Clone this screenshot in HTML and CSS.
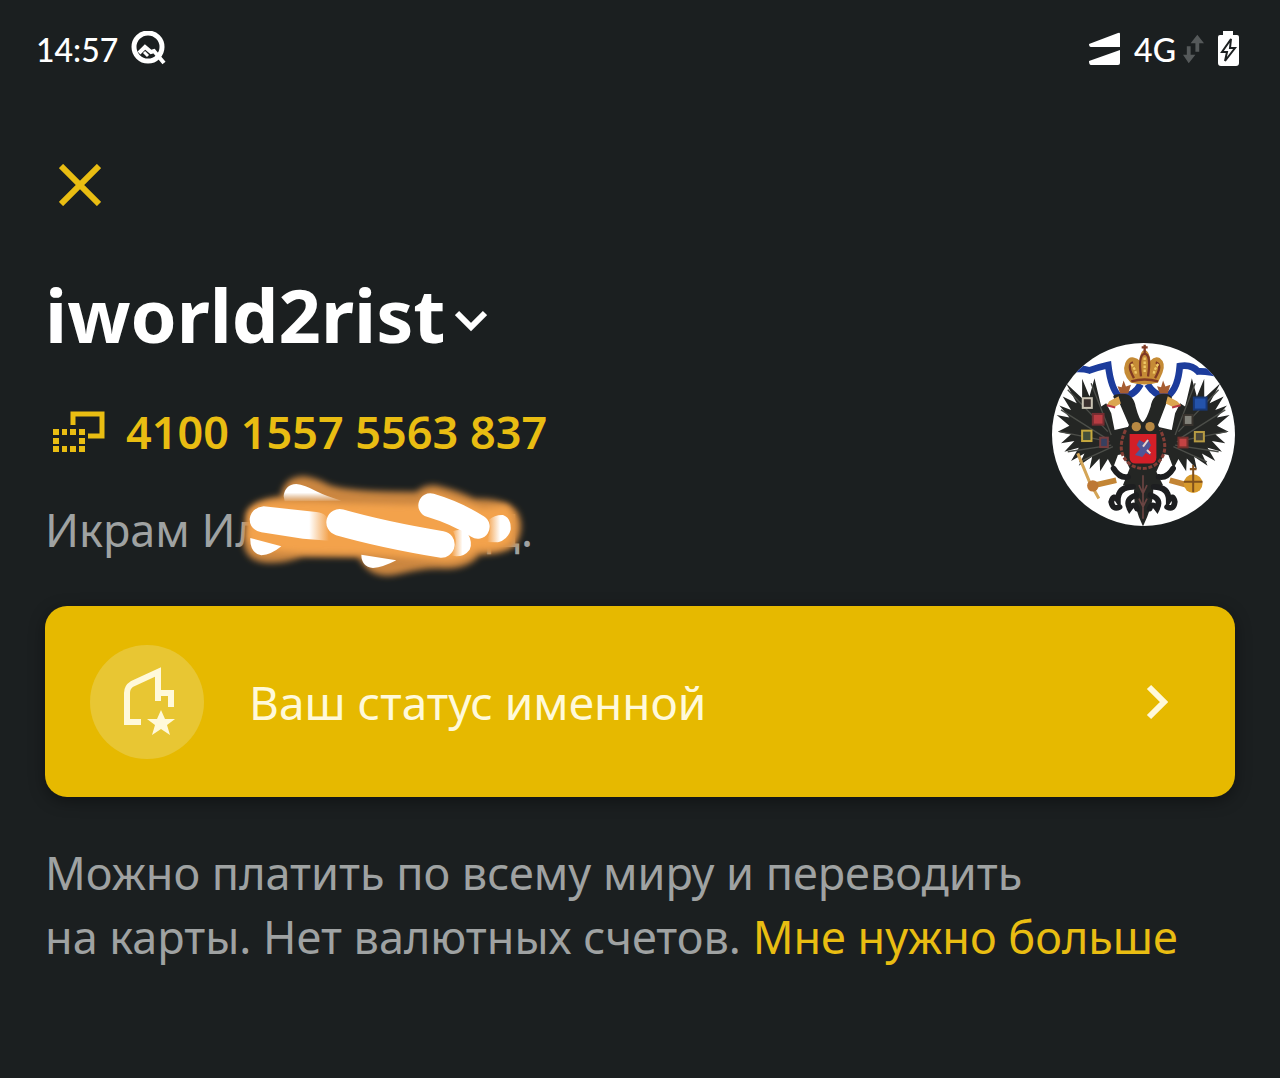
FILE: index.html
```html
<!DOCTYPE html>
<html lang="ru">
<head>
    <meta charset="UTF-8">
    <meta name="viewport" content="width=device-width, initial-scale=1.0">
    <title>Профиль</title>
    <link rel="stylesheet" href="styles.css">
</head>
<body>
    <!-- Строка состояния -->
    <div class="statusbar">
        <div class="status-group">
            <span>14:57</span>
            <svg width="36" height="36" viewBox="0 0 36 36" fill="none" stroke="#fff" stroke-width="5">
                <circle cx="17" cy="16" r="14"/>
                <path d="M8 22l6-6 6 5 3-1 10 12" stroke-width="4"/>
                <path d="M13 21l4 4" stroke-width="3"/>
            </svg>
        </div>
        <div class="status-group">
            <svg width="32" height="34" viewBox="0 0 32 34" fill="#fff">
                <path d="M0 12L29 1q2-1 2 1v13H2q-2 0-2-3zM0 29L31 18v13q0 2-2 2H2q-2 0-2-4z"/>
            </svg>
            <span class="network">4G</span>
            <svg class="traffic" width="21" height="32" viewBox="0 0 22 32" fill="#55595a">
                <path d="M15 1l7 9h-5v9h-4v-9H8zM4 13h4v9h5l-7 9-6-9h4z"/>
            </svg>
            <svg width="23" height="36" viewBox="0 0 23 36">
                <path d="M6 0h10v4h4q2 0 2 2v26q0 3-3 3H4q-3 0-3-3V6q0-2 2-2h3z" fill="#fff"/>
                <path d="M14 8L5 21h5l-2 9 10-13h-5z" fill="none" stroke="#1b1f20" stroke-width="2"/>
            </svg>
        </div>
    </div>

    <div class="page">
        <button class="close-btn" aria-label="Закрыть">
            <svg width="42" height="42" viewBox="0 0 42 42" fill="none" stroke="#e9bd12" stroke-width="6">
                <path d="M2 2l38 38M40 2L2 40"/>
            </svg>
        </button>

        <!-- Данные пользователя -->
        <div class="profile">
            <div class="info">
                <button class="login">
                    <span>iworld2rist</span>
                    <svg width="32" height="22" viewBox="0 0 32 22" fill="none" stroke="#fff" stroke-width="6">
                        <path d="M2 3l14 14L30 3"/>
                    </svg>
                </button>
                <a class="wallet" href="#">
                    <svg width="54" height="42" viewBox="0 0 54 42">
                        <path d="M21 14V3h29v22H36" fill="none" stroke="#e9bd12" stroke-width="5"/>
                        <path d="M1 18h6v6H1zM10 18h5v6h-5zM18 18h6v6h-6zM27 18h6v6h-6zM1 27h6v6H1zM27 27h6v6h-6zM1 35h6v6H1zM10 35h5v6h-5zM18 35h6v6h-6zM27 35h6v6h-6z" fill="#e9bd12"/>
                    </svg>
                    <span>4100 1557 5563 837</span>
                </a>
                <div class="name">
                    <span>Икрам Ил</span>
                    <span>Д.</span>
                    <svg class="scribble" viewBox="580 10 900 345">
                        <defs>
                            <filter id="glow" x="-10%" y="-20%" width="120%" height="140%">
                                <feGaussianBlur stdDeviation="9"/>
                            </filter>
                            <linearGradient id="fadeDown" x1="0" y1="0" x2="0" y2="1">
                                <stop offset="0.5" stop-color="#fff"/>
                                <stop offset="1" stop-color="#fff" stop-opacity="0.1"/>
                            </linearGradient>
                            <linearGradient id="fadeLeft" x1="0" y1="0" x2="1" y2="0">
                                <stop offset="0.1" stop-color="#f3a24c"/>
                                <stop offset="0.6" stop-color="#fff"/>
                            </linearGradient>
                            <linearGradient id="fadeRight" x1="0" y1="0" x2="1" y2="0">
                                <stop offset="0.75" stop-color="#fff"/>
                                <stop offset="1" stop-color="#f3a24c"/>
                            </linearGradient>
                        </defs>
                        <path d="M725 90Q735 35 795 35Q830 40 870 62Q930 82 1130 82Q1160 52 1205 66Q1255 78 1305 102Q1400 100 1432 140Q1460 190 1425 245Q1390 270 1320 270Q1290 310 1220 312Q1150 308 1080 328Q1010 345 975 305L955 278L790 276Q720 300 670 293Q620 285 612 240L618 150Q630 105 725 95z" fill="#cb8640" filter="url(#glow)"/>
                        <path d="M735 110Q860 110 900 115L1130 120L1180 85L1330 130L1400 120Q1440 160 1415 235Q1380 258 1310 255Q1280 290 1210 290L1080 278L960 268L790 266L650 255L622 220L628 145Q650 110 735 110z" fill="#f3a24c" filter="url(#glow)"/>
                        <path d="M732 95Q735 60 770 58Q795 60 830 80Q860 95 905 108L735 110z" fill="url(#fadeDown)"/>
                        <path d="M632 220Q630 265 665 272Q695 270 725 245z" fill="#fff"/>
                        <path d="M965 270Q965 305 1000 310Q1030 308 1070 287z" fill="#fff"/>
                        <path d="M672 125L830 142Q875 148 865 190L868 228L790 222L665 203Q630 195 630 163Q635 130 672 125z" fill="url(#fadeRight)"/>
                        <path d="M1335 232Q1360 205 1348 165Q1365 150 1390 151Q1415 160 1413 195Q1405 225 1375 233z" fill="url(#fadeLeft)"/>
                        <path d="M1230 272Q1260 240 1240 200Q1265 190 1285 207Q1300 235 1290 255Q1275 275 1250 275z" fill="url(#fadeLeft)"/>
                        <path d="M1172 122Q1250 145 1314 186" fill="none" stroke="#fff" stroke-width="72" stroke-linecap="round"/>
                        <path d="M900 173Q1030 210 1205 239" fill="none" stroke="#fff" stroke-width="80" stroke-linecap="round"/>
                    </svg>
                </div>
            </div>
            <svg class="avatar" viewBox="38 25 547 547">
                <rect x="38" y="25" width="547" height="547" fill="#fff"/>
                <!-- лента -->
                <g fill="none" stroke="#1c3c9c" stroke-width="20">
                    <path d="M80 106Q125 98 150 107Q175 98 206 91Q214 160 238 184Q280 190 303 148"/>
                    <path d="M560 122Q500 108 475 110Q455 88 420 94Q415 160 385 183Q350 190 323 148"/>
                </g>
                <!-- крылья -->
                <g fill="#242624">
                    <path id="wing" d="M290 270L225 285L215 235L200 205L185 215L165 130L150 185L128 132L128 190L80 145L112 205L70 185L95 225L60 212L90 248L52 240L90 272L55 290L95 298L65 325L105 318L75 350L118 338L95 378L135 355L118 392L158 365L150 402L180 370L182 408L205 372L220 400L235 360L285 350z"/>
                    <use href="#wing" transform="matrix(-1 0 0 1 621 0)"/>
                    <path d="M240 205Q205 180 235 178Q280 170 288 215Q300 260 310 262Q320 255 333 215Q340 170 385 178Q410 190 380 205L355 270L385 330L350 410L370 450L340 455Q345 500 310 573Q275 500 285 455L250 450L270 400L238 330L268 270z"/>
                </g>
                <g fill="none" stroke="#4c4e49" stroke-width="4">
                    <path d="M85 165L205 290M65 225L200 310M60 290L210 320M85 350L215 330M120 380L220 335M155 145L215 300"/>
                    <path d="M536 165L416 290M556 225L421 310M561 290L411 320M536 350L406 330M501 380L401 335M466 145L406 300"/>
                </g>
                <!-- хвост и лапы -->
                <g fill="none" stroke="#1d1e20" stroke-width="17" stroke-linecap="round">
                    <path d="M280 455Q235 455 235 495Q222 475 215 500Q220 525 240 515M290 480Q255 490 270 520Q285 500 292 520M265 425Q240 430 222 400"/>
                    <path d="M342 455Q387 455 387 495Q400 475 405 500Q402 525 382 515M332 480Q367 490 352 520Q337 500 330 520M357 425Q382 430 400 400"/>
                </g>
                <path d="M310 420v130M298 450l12 25 12-25M298 490l12 25 12-25" fill="none" stroke="#6a4442" stroke-width="5"/>
                <path d="M230 435L165 450M390 435L450 452" fill="none" stroke="#c38535" stroke-width="17"/>
                <path d="M115 355L150 440L178 490" fill="none" stroke="#d4a557" stroke-width="9"/>
                <circle cx="160" cy="452" r="17" fill="#bd7835"/>
                <circle cx="460" cy="445" r="28" fill="#d79a2c"/>
                <path d="M432 440h56M460 390v80M450 402h20" stroke="#80501d" stroke-width="6" fill="none"/>
                <!-- гербы -->
                <g stroke-width="6">
                    <rect x="130" y="190" width="27" height="29" fill="#3b302e" stroke="#c9c3b3"/>
                    <rect x="160" y="237" width="32" height="32" fill="#b83c42" stroke="#762d31"/>
                    <rect x="128" y="287" width="28" height="31" fill="#44503a" stroke="#c5a83e"/>
                    <rect x="182" y="308" width="23" height="28" fill="#37405f" stroke="#743c3e"/>
                    <rect x="462" y="188" width="38" height="36" fill="#2453aa" stroke="#173877"/>
                    <rect x="432" y="240" width="26" height="30" fill="#82827a" stroke="#38332e"/>
                    <rect x="465" y="291" width="27" height="28" fill="#4a4639" stroke="#b69b43"/>
                    <rect x="416" y="308" width="27" height="29" fill="#c34343" stroke="#74302c"/>
                </g>
                <g fill="none" stroke="#833e36" stroke-width="9" stroke-dasharray="12 5">
                    <path d="M258 285Q225 355 275 390Q310 410 345 390Q395 355 362 285"/>
                </g>
                <circle cx="290" cy="275" r="14" fill="#b88943"/>
                <circle cx="331" cy="275" r="14" fill="#b88943"/>
                <path d="M270 297h80v70q0 18-18 18h-44q-18 0-18-18z" fill="#d41f28"/>
                <path d="M286 360l15-18-10-12 8-15 15 8 10-12 10 20-8 13 8 17-16-7-10 12z" fill="#505696"/>
                <path d="M322 345l10 10M310 335l15-20" stroke="#e5d5ce" stroke-width="6"/>
                <!-- головы -->
                <path d="M237 184l-28 15-7 12 22 5 20-10zM384 184l28 15 12 12-24 5-22-10z" fill="#dba650"/>
                <path d="M202 211l25 7M422 211l-25 7" stroke="#b73a43" stroke-width="6"/>
                <!-- короны -->
                <path id="small-crown" d="M242 176l-8-22 12 3 6-20 7 18 15-5-8 26z" fill="#a65d32"/>
                <use href="#small-crown" x="118"/>
                <path d="M273 143Q245 115 257 85Q265 65 282 68Q295 70 300 78Q300 50 315 45Q330 50 332 78Q345 62 360 70Q380 85 368 115L355 143Q315 155 273 143z" fill="#c58b36"/>
                <path d="M283 130Q260 90 280 83M304 125Q295 60 315 57Q335 60 325 125M346 130Q370 90 348 83M275 140q40-12 80 0M315 30v25M306 38h18" fill="none" stroke="#803a24" stroke-width="7"/>
                <path d="M275 88q12 15 14 30M356 88q-12 15-14 30M315 68v45" fill="none" stroke="#f0ca67" stroke-width="7" stroke-dasharray="8 4"/>
            </svg>
        </div>

        <!-- Статус кошелька -->
        <button class="status-card">
            <span class="status-icon">
                <svg width="114" height="114" viewBox="0 0 114 114">
                    <path d="M51 77H37V48q0-6 5-9l26-12v29M68 48h13v14" fill="none" stroke="#fff9da" stroke-width="6"/>
                    <path d="M71 65l4 9h10l-8 6 3 10-9-6-9 6 3-10-8-6h10z" fill="#fff9da"/>
                </svg>
            </span>
            <span class="status-text">Ваш статус именной</span>
            <svg width="22" height="36" viewBox="0 0 22 36" fill="none" stroke="#fff9da" stroke-width="6">
                <path d="M3 3l15 15L3 33"/>
            </svg>
        </button>

        <p class="note">Можно платить по всему миру и переводить<br>на карты. Нет валютных счетов. <a href="#">Мне нужно больше</a></p>
    </div>
</body>
</html>
```
FILE: styles.css
```css
body {
    font-family: "Noto Sans", sans-serif;
    margin: 0;
    background: #1b1f20;
    color: #9fa2a2;
    font-size: 45px;
}
button {
    font-family: inherit;
    background: none;
    border: none;
    padding: 0;
    cursor: pointer;
}
a {
    color: #e9bd12;
    text-decoration: none;
}
svg {
    display: block;
    flex-shrink: 0;
}
.statusbar {
    display: flex;
    justify-content: space-between;
    align-items: center;
    height: 98px;
    padding: 0 40px 0 36px;
    font-family: Lato, sans-serif;
    font-size: 32px;
    font-weight: 500;
    color: #fff;
}
.status-group {
    display: flex;
    align-items: center;
    gap: 13px;
}
.traffic {
    margin-left: -6px;
}
.page {
    padding: 0 45px;
}
.close-btn {
    display: block;
    margin-top: 66px;
    margin-left: 14px;
}
.profile {
    display: flex;
    justify-content: space-between;
    align-items: flex-start;
    margin-top: 69px;
}
.login {
    display: flex;
    align-items: center;
    gap: 10px;
    font-size: 74px;
    font-weight: 700;
    line-height: 80px;
    color: #fff;
}
.login svg {
    margin-top: 12px;
}
.wallet {
    display: flex;
    align-items: center;
    gap: 20px;
    margin-top: 47px;
    padding-left: 7px;
    font-weight: 600;
    line-height: 60px;
}
.name {
    position: relative;
    display: flex;
    justify-content: space-between;
    width: 488px;
    margin-top: 38px;
    line-height: 60px;
}
/* Закрашенная часть имени */
.scribble {
    position: absolute;
    left: 188px;
    top: -32px;
    width: 300px;
    height: 115px;
}
.avatar {
    width: 183px;
    height: 183px;
    margin-top: 68px;
    border-radius: 50%;
}
.status-card {
    display: flex;
    align-items: center;
    width: 100%;
    height: 191px;
    margin-top: 46px;
    padding: 0 67px 0 45px;
    border-radius: 22px;
    background: #e6b900;
    box-shadow: 0 4px 16px rgba(0, 0, 0, 0.4);
    color: #fff9da;
    font-size: 46px;
}
.status-icon {
    border-radius: 50%;
    background: #e8c633;
}
.status-text {
    flex: 1;
    margin-left: 45px;
    text-align: left;
}
.note {
    margin: 44px 0 0;
    line-height: 64px;
}
```
